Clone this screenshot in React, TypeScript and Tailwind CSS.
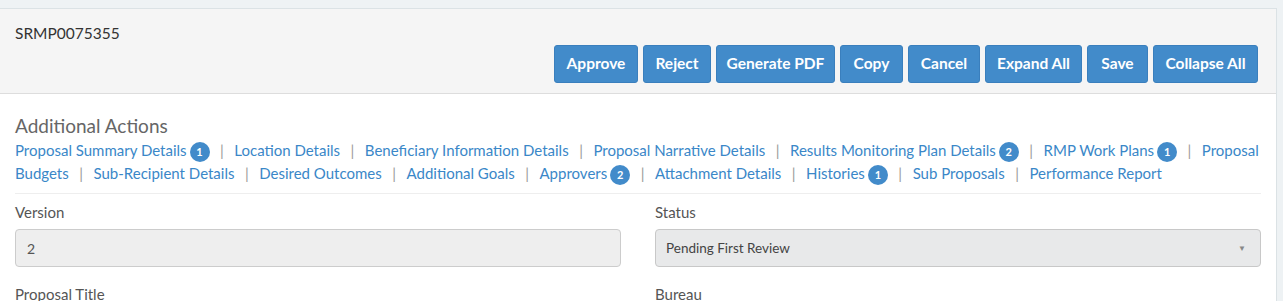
import React from "react";

const font = { fontFamily: "Lato, 'Liberation Sans', sans-serif" };

function Badge({ n }: { n: number }) {
  return (
    <span className="ml-[3px] inline-block h-[20px] w-[20px] rounded-full bg-[#428bca] text-center align-middle text-[11px] font-bold leading-[20px] text-white">
      {n}
    </span>
  );
}

function Sep() {
  return <span className="mx-[10.5px] text-[#9a9a9a]">|</span>;
}

function L({ children, n }: { children: React.ReactNode; n?: number }) {
  return (
    <span>
      <a className="cursor-pointer text-[#3a87c8]">{children}</a>
      {n !== undefined && <Badge n={n} />}
    </span>
  );
}

const buttons: [string, string][] = [
  ["Approve", "w-[84px]"],
  ["Reject", "w-[68px]"],
  ["Generate PDF", "w-[119px]"],
  ["Copy", "w-[63px]"],
  ["Cancel", "w-[72px]"],
  ["Expand All", "w-[97px]"],
  ["Save", "w-[61px]"],
  ["Collapse All", "w-[105px]"],
];

export default function App() {
  return (
    <div className="h-[301px] overflow-hidden bg-[#eef2f4] pt-[8px] pr-[6px]" style={font}>
      <div className="h-full border-t border-r border-[#dbe2e5] bg-white">
        <div className="border-b border-[#dddddd] bg-[#f5f5f5] pt-[13px] pb-[10px] pl-[15px] pr-[18px]">
          <div className="text-[15.5px] leading-[22px] text-[#333]">SRMP0075355</div>
          <div className="mt-[1px] flex justify-end gap-[5px]">
            {buttons.map(([b, w]) => (
              <button
                key={b}
                className={`h-[38px] ${w} rounded-[3px] border border-[#3a7fbd] bg-[#428bca] text-[15.5px] font-bold text-white`}
              >
                {b}
              </button>
            ))}
          </div>
        </div>
        <div className="px-[15px] pt-[21px]">
          <div className="text-[19px] leading-[22px] text-[#666]">Additional Actions</div>
          <div className="mt-[2px] text-[15px] leading-[22px]">
            <div className="whitespace-nowrap">
              <L n={1}>Proposal Summary Details</L>
              <Sep />
              <L>Location Details</L>
              <Sep />
              <L>Beneficiary Information Details</L>
              <Sep />
              <L>Proposal Narrative Details</L>
              <Sep />
              <L n={2}>Results Monitoring Plan Details</L>
              <Sep />
              <L n={1}>RMP Work Plans</L>
              <Sep />
              <a className="cursor-pointer text-[#3a87c8]">Proposal</a>
            </div>
            <div className="whitespace-nowrap">
              <a className="cursor-pointer text-[#3a87c8]">Budgets</a>
              <Sep />
              <L>Sub-Recipient Details</L>
              <Sep />
              <L>Desired Outcomes</L>
              <Sep />
              <L>Additional Goals</L>
              <Sep />
              <L n={2}>Approvers</L>
              <Sep />
              <L>Attachment Details</L>
              <Sep />
              <L n={1}>Histories</L>
              <Sep />
              <L>Sub Proposals</L>
              <Sep />
              <L>Performance Report</L>
            </div>
          </div>
          <div className="mt-[8px] border-t border-[#eeeeee]" />
          <div className="grid grid-cols-2 gap-x-[34px] pt-[7px]">
            <div>
              <div className="text-[15px] leading-[22px] text-[#555]">Version</div>
              <div className="mt-[6px] flex h-[38px] items-center rounded-[4px] border border-[#cccccc] bg-[#eeeeee] px-[11px] text-[14px] text-[#555]">
                2
              </div>
              <div className="mt-[16px] text-[15px] leading-[22px] text-[#555]">Proposal Title</div>
            </div>
            <div>
              <div className="text-[15px] leading-[22px] text-[#555]">Status</div>
              <div className="mt-[6px] flex h-[38px] items-center justify-between rounded-[4px] border border-[#c8c8c8] bg-[#e8e9ea] pl-[10px] pr-[14px] text-[13.5px] text-[#444]">
                <span>Pending First Review</span>
                <span className="text-[8px] text-[#888]">▼</span>
              </div>
              <div className="mt-[16px] text-[15px] leading-[22px] text-[#555]">Bureau</div>
            </div>
          </div>
        </div>
      </div>
    </div>
  );
}
